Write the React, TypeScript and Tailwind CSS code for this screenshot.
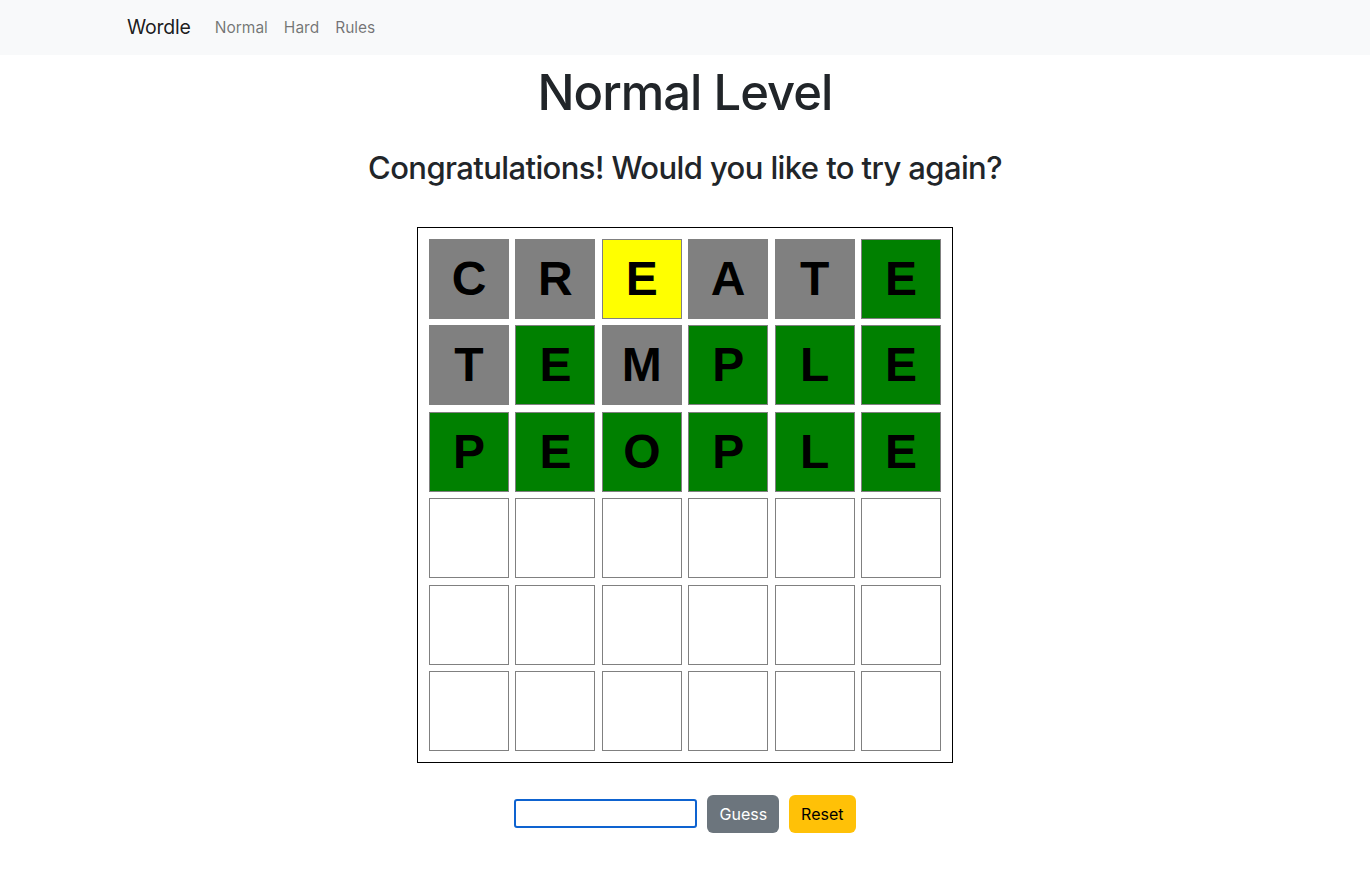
import { useState } from "react";

type Tile = { letter: string; state: "gray" | "green" | "yellow" | "empty" };

const rows: Tile[][] = [
    [
        { letter: "C", state: "gray" },
        { letter: "R", state: "gray" },
        { letter: "E", state: "yellow" },
        { letter: "A", state: "gray" },
        { letter: "T", state: "gray" },
        { letter: "E", state: "green" },
    ],
    [
        { letter: "T", state: "gray" },
        { letter: "E", state: "green" },
        { letter: "M", state: "gray" },
        { letter: "P", state: "green" },
        { letter: "L", state: "green" },
        { letter: "E", state: "green" },
    ],
    [
        { letter: "P", state: "green" },
        { letter: "E", state: "green" },
        { letter: "O", state: "green" },
        { letter: "P", state: "green" },
        { letter: "L", state: "green" },
        { letter: "E", state: "green" },
    ],
];

// pad the board out to six guesses
while (rows.length < 6) {
    rows.push(Array.from({ length: 6 }, () => ({ letter: "", state: "empty" as const })));
}

const tileColors = {
    gray: "bg-[#808080]",
    green: "bg-[#008000]",
    yellow: "bg-[#ffff00]",
    empty: "bg-white",
};

function Navbar() {
    return (
        <nav className="bg-[#f8f9fa] h-[55px]">
            <div className="mx-auto w-[1140px] px-3 h-full flex items-center">
                <span className="text-[19.5px] text-[rgba(0,0,0,0.9)] mr-[16px] tracking-[-0.2px]">Wordle</span>
                <ul className="flex text-[15.5px] text-[rgba(0,0,0,0.55)]">
                    <li className="px-2">Normal</li>
                    <li className="px-2">Hard</li>
                    <li className="px-2">Rules</li>
                </ul>
            </div>
        </nav>
    );
}

function Board() {
    return (
        <div className="border border-black p-[11px] w-[536px]">
            <div className="grid grid-cols-6 gap-[6.4px]">
                {rows.flat().map((tile, i) => (
                    <div
                        key={i}
                        className={`h-[80px] border border-[#808080] flex items-center justify-center text-[48px] font-bold text-black font-['Liberation_Sans',Arial,sans-serif] ${tileColors[tile.state]}`}
                    >
                        {tile.letter}
                    </div>
                ))}
            </div>
        </div>
    );
}

export default function App() {
    const [guess, setGuess] = useState("");

    return (
        <div className="min-h-[885px] bg-white text-[#212529] font-['Inter',sans-serif]">
            <Navbar />
            <main className="flex flex-col items-center">
                <h1 className="mt-[9px] text-[49px] leading-[1.2] font-medium tracking-[-1px]">
                    Normal Level
                </h1>
                <h2 className="mt-[26px] text-[31px] leading-[1.2] font-medium tracking-[-0.6px]">
                    Congratulations! Would you like to try again?
                </h2>
                <div className="mt-[41px]">
                    <Board />
                </div>
                <div className="mt-[32px] flex items-center gap-[10px]">
                    <input
                        autoFocus
                        value={guess}
                        onChange={(e) => setGuess(e.target.value)}
                        className="w-[183px] h-[29px] border-2 border-[#0e63d0] rounded-[3px] px-[3px] outline-none"
                    />
                    <button className="h-[38px] px-3 rounded-md bg-[#6c757d] text-white text-[16px]">
                        Guess
                    </button>
                    <button className="h-[38px] px-3 rounded-md bg-[#ffc107] text-black text-[16px]">
                        Reset
                    </button>
                </div>
            </main>
        </div>
    );
}
